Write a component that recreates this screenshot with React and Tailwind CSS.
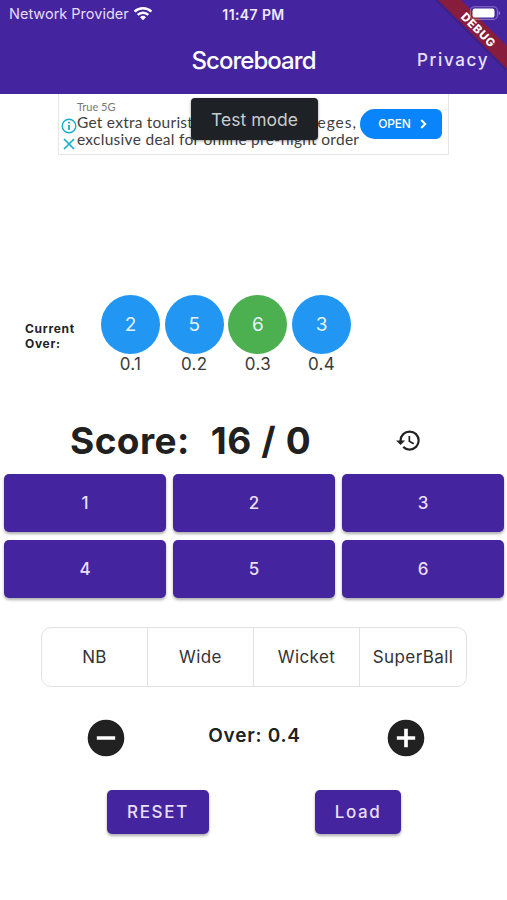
import React from "react";

const balls = [
  { runs: "2", over: "0.1", color: "bg-[#2196f3]" },
  { runs: "5", over: "0.2", color: "bg-[#2196f3]" },
  { runs: "6", over: "0.3", color: "bg-[#4caf50]" },
  { runs: "3", over: "0.4", color: "bg-[#2196f3]" },
];

const extras = ["NB", "Wide", "Wicket", "SuperBall"];

function WifiIcon() {
  return (
    <svg className="ml-[4px] h-[15px] w-[20px]" viewBox="0 0 20 15" fill="none" stroke="white" strokeWidth="2.4">
      <path d="M1.6 4.7a12 12 0 0 1 16.8 0" />
      <path d="M4.7 7.9a7.5 7.5 0 0 1 10.6 0" />
      <path d="M10 13.3l-3-3a4.3 4.3 0 0 1 6 0z" fill="white" stroke="none" />
    </svg>
  );
}

function DebugRibbon() {
  return (
    <svg className="absolute right-0 top-0 h-[72px] w-[72px]" viewBox="0 0 72 72">
      <path d="M1 -2L72 69" stroke="#000" strokeOpacity="0.12" strokeWidth="5" />
      <path d="M3 0H26L72 46V69Z" fill="#871c3c" />
      <text
        x="0"
        y="4.1"
        transform="translate(43.5 30) rotate(45)"
        textAnchor="middle"
        fill="white"
        fontFamily="Inter, sans-serif"
        fontSize="11.5"
        fontWeight="800"
        letterSpacing="0.7"
      >
        DEBUG
      </text>
    </svg>
  );
}

function Battery() {
  return (
    <svg className="absolute right-[6px] top-[6px] h-[14px] w-[32px]" viewBox="0 0 32 14">
      <rect x="1.4" y="0.8" width="27" height="12.6" rx="4" fill="none" stroke="white" strokeOpacity="0.35" strokeWidth="1.1" />
      <rect x="3.5" y="2.6" width="22" height="9" rx="2.2" fill="white" />
      <path d="M29.6 5c2 .8 2 3.4 0 4.2z" fill="white" fillOpacity="0.45" />
    </svg>
  );
}

function Header() {
  return (
    <header className="relative h-[94px] bg-[#45259f] text-white">
      <div className="grid h-[28px] grid-cols-3 items-center text-[14.5px]">
        <div className="flex items-center whitespace-nowrap pl-[9px] text-[#e5dcfa]">
          <span>Network Provider</span>
          <WifiIcon />
        </div>
        <span className="text-center text-[14px] font-semibold tracking-[0.4px] text-[#eee8fc]">11:47 PM</span>
      </div>
      <div className="grid h-[65px] grid-cols-[114px_1fr_114px] items-center">
        <h1 className="col-start-2 text-center text-[24px] font-medium tracking-[-0.95px]">Scoreboard</h1>
        <span className="pl-[24px] text-[17px] font-medium tracking-[1.65px] text-[#e9e1fb]">Privacy</span>
      </div>
      <DebugRibbon />
      <Battery />
    </header>
  );
}

function AdBanner() {
  return (
    <section className="relative mx-auto flex h-[61px] w-[391px] border border-t-0 border-[#e6e6e6] bg-white font-[Lato,sans-serif]">
      <div className="flex w-[18px] flex-col items-center gap-[3px] pl-[2px] pt-[24px]">
        <svg className="h-[16px] w-[16px] shrink-0" viewBox="0 0 16 16" fill="none" stroke="#16aecb" strokeWidth="1.4">
          <circle cx="8" cy="8" r="6.8" />
          <path d="M8 7v5M8 3.8v1.8" strokeWidth="1.8" />
        </svg>
        <svg className="h-[14px] w-[14px] shrink-0" viewBox="0 0 14 14" stroke="#16aecb" strokeWidth="1.7">
          <path d="M2 2l10 10M12 2L2 12" />
        </svg>
      </div>
      <div className="w-[283px] whitespace-nowrap pt-[6px]">
        <p className="text-[11px] leading-[14px] text-[#777]">True 5G</p>
        <p className="flex w-[280px] justify-between text-[15.5px] leading-[17px] tracking-[0.24px] text-[#404040]">
          <span>Get extra tourist</span>
          <span className="tracking-[1px]">privileges,</span>
        </p>
        <p className="text-[15.5px] leading-[17px] tracking-[0.29px] text-[#404040]">exclusive deal for online pre-flight order</p>
      </div>
      <div className="mt-[15px] flex h-[30px] w-[82px] items-center justify-center gap-[9px] rounded-l-[15px] rounded-r-[6px] bg-[#0a84fb] pl-[3px] font-[Inter,sans-serif] text-[12px] font-medium tracking-[-0.2px] text-white">
        OPEN
        <svg className="h-[10px] w-[7px]" viewBox="0 0 7 10" fill="none" stroke="white" strokeWidth="2">
          <path d="M1.2 1l4 4-4 4" />
        </svg>
      </div>
      <div className="absolute left-[132px] top-[4px] flex h-[42px] w-[127px] items-center justify-center rounded-[4px] bg-[#1e2125] pt-[2px] font-[Inter,sans-serif] text-[17.5px] text-[#c9cbcd] shadow-[0_1px_3px_rgba(0,0,0,0.4)]">
        Test mode
      </div>
    </section>
  );
}

function CurrentOver() {
  return (
    <section className="mt-[140px] flex h-[80px]">
      <h2 className="w-[101px] pl-[25px] pt-[26px] text-[12px] font-bold leading-[15px] tracking-[0.7px]">
        Current
        <br />
        Over:
      </h2>
      <div className="flex gap-[4.7px]">
        {balls.map((ball) => (
          <div key={ball.over} className="flex w-[59px] flex-col items-center">
            <div className={`flex h-[59px] w-[59px] shrink-0 items-center justify-center rounded-full pt-[2px] text-[19px] text-[#e5f3fe] ${ball.color}`}>
              {ball.runs}
            </div>
            <span className="text-[17px] leading-[20px] tracking-[0.3px] text-[#3b3b3b]">{ball.over}</span>
          </div>
        ))}
      </div>
    </section>
  );
}

function ScoreLine() {
  return (
    <section className="mt-[41px] flex h-[49px] items-center">
      <p className="flex w-[395px] gap-[21px] whitespace-nowrap pl-[70px] text-[37px] font-bold text-[#202020]">
        <span className="tracking-[0.4px]">Score:</span>
        <span className="tracking-[0.65px]">16 / 0</span>
      </p>
      <svg className="h-[27px] w-[27px]" viewBox="0 0 24 24" fill="#212121">
        <path d="M13 3a9 9 0 0 0-9 9H1l3.89 3.89.07.14L9 12H6c0-3.87 3.13-7 7-7s7 3.13 7 7-3.13 7-7 7c-1.93 0-3.68-.79-4.94-2.06l-1.42 1.42A8.95 8.95 0 0 0 13 21a9 9 0 0 0 0-18zm-1 5v5l4.25 2.52.77-1.28-3.52-2.09V8z" />
      </svg>
    </section>
  );
}

const raised = "bg-[#45259f] pt-[2px] font-medium text-[#eadffb] shadow-[0_2px_3px_rgba(0,0,0,0.32)]";

function RunPad() {
  return (
    <section className="mt-[9px] grid grid-cols-3 gap-x-[7px] gap-y-[8px] pl-[4px] pr-[3px]">
      {[1, 2, 3, 4, 5, 6].map((n) => (
        <button key={n} className={`h-[58px] rounded-[5px] text-[17px] ${raised}`}>
          {n}
        </button>
      ))}
    </section>
  );
}

export default function App() {
  return (
    <main className="h-[900px] w-[507px] overflow-hidden bg-white font-[Inter,sans-serif] text-[#212121]">
      <Header />
      <AdBanner />
      <CurrentOver />
      <ScoreLine />
      <RunPad />
      <section className="ml-[41px] mt-[29px] grid h-[60px] w-[426px] grid-cols-4 divide-x divide-[#e2e2e2] rounded-[10px] border border-[#e2e2e2]">
        {extras.map((label) => (
          <button key={label} className="pt-[2px] text-[17px] tracking-[0.4px] text-[#333]">
            {label}
          </button>
        ))}
      </section>
      <section className="mt-[29px] flex h-[43px] items-center justify-between pl-[84px] pr-[79px]">
        <svg className="h-[44px] w-[44px]" viewBox="0 0 24 24" fill="#212121">
          <path d="M12 2a10 10 0 1 0 0 20 10 10 0 0 0 0-20zm5 11H7v-2h10z" />
        </svg>
        <p className="pb-[3px] pr-[3px] text-[19px] font-semibold tracking-[0.75px]">Over: 0.4</p>
        <svg className="h-[44px] w-[44px]" viewBox="0 0 24 24" fill="#212121">
          <path d="M12 2a10 10 0 1 0 0 20 10 10 0 0 0 0-20zm5 11h-4v4h-2v-4H7v-2h4V7h2v4h4z" />
        </svg>
      </section>
      <section className="mt-[31px] flex gap-[106px] pl-[107px]">
        <button className={`h-[44px] w-[102px] rounded-[5px] text-[17px] tracking-[1.7px] ${raised}`}>RESET</button>
        <button className={`h-[44px] w-[86px] rounded-[5px] text-[17px] tracking-[1.6px] ${raised}`}>Load</button>
      </section>
    </main>
  );
}
